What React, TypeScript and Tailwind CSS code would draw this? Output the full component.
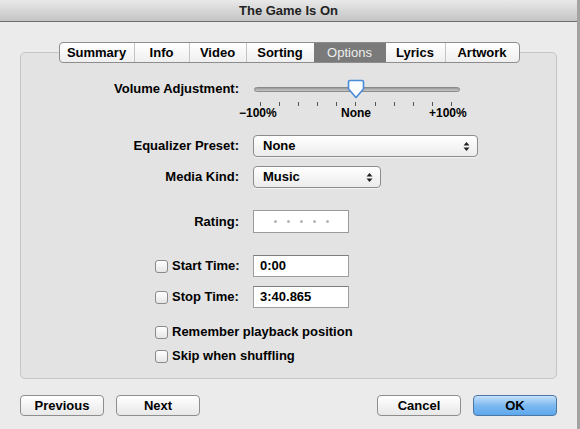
import React from "react";

const font = { fontFamily: '"Liberation Sans", Arial, sans-serif' };

const tabs = ["Summary", "Info", "Video", "Sorting", "Options", "Lyrics", "Artwork"];
const tabWidths: Record<string, string> = {
  Summary: "w-[74px]",
  Info: "w-[55px]",
  Video: "w-[57px]",
  Sorting: "w-[68px]",
  Options: "w-[72px]",
  Lyrics: "w-[59px]",
  Artwork: "w-[74px]",
};

function Arrows() {
  return (
    <svg width="7" height="11" viewBox="0 0 7 11" className="shrink-0">
      <path d="M3.5 1 L6.5 4.5 H0.5 Z" fill="#222" />
      <path d="M3.5 10 L6.5 6.5 H0.5 Z" fill="#222" />
    </svg>
  );
}

function Popup({ label, width }: { label: string; width: string }) {
  return (
    <div
      className={`flex h-[22px] ${width} items-center justify-between rounded-[4px] border border-[#8c8c8c] bg-gradient-to-b from-white to-[#ececec] pl-[9px] pr-[7px] shadow-[0_1px_0_rgba(255,255,255,0.6)]`}
    >
      <span>{label}</span>
      <Arrows />
    </div>
  );
}

function Checkbox() {
  return (
    <span className="block h-[13px] w-[13px] shrink-0 rounded-[3px] border border-[#8a8a8a] bg-gradient-to-b from-white to-[#e6e6e6]" />
  );
}

function Field({ value }: { value: string }) {
  return (
    <div className="flex h-[22px] w-[96px] items-center border border-[#9e9e9e] border-t-[#7d7d7d] bg-white pl-[6px]">
      {value}
    </div>
  );
}

function Button({ label, primary }: { label: string; primary?: boolean }) {
  return (
    <button
      type="button"
      className={
        primary
          ? "h-[21px] w-[84px] rounded-[4px] border border-[#4f77a3] bg-gradient-to-b from-[#c4e0fa] via-[#7db9f0] to-[#5da7ee] font-bold"
          : "h-[21px] w-[84px] rounded-[4px] border border-[#8e8e8e] bg-gradient-to-b from-white to-[#e8e8e8] font-bold"
      }
    >
      {label}
    </button>
  );
}

export default function App() {
  const ticks = Array.from({ length: 11 }, (_, i) => i);

  return (
    <div
      style={font}
      className="flex h-[429px] w-[580px] flex-col overflow-hidden border-r-[3px] border-[#a3a3a3] bg-[#ebebeb] text-[13px] text-black"
    >
      <div className="flex h-[22px] shrink-0 items-center justify-center border-b border-[#6f6f6f] bg-gradient-to-b from-[#e9e9e9] to-[#c4c4c4] text-[13px] font-bold text-[#222]">
        The Game Is On
      </div>

      <div className="px-[20px] pt-[20px]">
        <div className="relative z-10 flex justify-center pl-[1px]">
          <div className="flex h-[21px] overflow-hidden rounded-[4px] border border-[#8d8d8d] bg-gradient-to-b from-white to-[#efefef] font-bold">
            {tabs.map((t, i) => (
              <div
                key={t}
                className={`flex items-center justify-center ${tabWidths[t]} ${
                  t === "Options"
                    ? "bg-[#7a7a7a] font-normal text-[#eeeeee]"
                    : i > 0 && tabs[i - 1] !== "Options"
                    ? "border-l border-[#c4c4c4]"
                    : ""
                }`}
              >
                {t}
              </div>
            ))}
          </div>
        </div>

        <div className="-mt-[11px] h-[327px] rounded-[5px] border border-[#c6c6c6] bg-[#e3e3e3] pt-[27px] font-bold whitespace-nowrap">
          {/* Volume */}
          <div className="flex h-[18px] items-center">
            <div className="w-[218px] text-right">Volume Adjustment:</div>
            <div className="relative ml-[15px] h-[18px] w-[206px]">
              <div className="absolute left-0 right-0 top-[7px] h-[5px] rounded-full border border-[#8a8a8a] bg-gradient-to-b from-[#9a9a9a] to-[#c9c9c9]" />
              <svg
                width="18"
                height="20"
                viewBox="0 0 18 20"
                className="absolute left-[93px] top-[-1px]"
              >
                <path
                  d="M3 1.5 H15 Q16.5 1.5 16.5 3 V10 L9 18.5 L1.5 10 V3 Q1.5 1.5 3 1.5 Z"
                  fill="#fbfdff"
                  stroke="#4a8ad6"
                  strokeWidth="1.6"
                  strokeLinejoin="round"
                />
              </svg>
            </div>
          </div>
          <div className="flex">
            <div className="w-[218px]" />
            <div className="w-[240px]">
              <div className="ml-[21px] mt-[4px] flex h-[4px] w-[192px] justify-between">
                {ticks.map((i) => (
                  <span key={i} className="block h-[4px] w-px bg-[#555]" />
                ))}
              </div>
              <div className="flex h-[13px] items-center text-[12px]">
                <span className="w-[36px]">−100%</span>
                <span className="ml-[66px] w-[30px] text-center">None</span>
                <span className="ml-[58px]">+100%</span>
              </div>
            </div>
          </div>

          {/* Equalizer */}
          <div className="mt-[16px] flex items-center">
            <div className="w-[218px] text-right">Equalizer Preset:</div>
            <div className="ml-[14px]">
              <Popup label="None" width="w-[225px]" />
            </div>
          </div>

          {/* Media kind */}
          <div className="mt-[9px] flex items-center">
            <div className="w-[218px] text-right">Media Kind:</div>
            <div className="ml-[14px]">
              <Popup label="Music" width="w-[128px]" />
            </div>
          </div>

          {/* Rating */}
          <div className="mt-[22px] flex items-center">
            <div className="w-[218px] text-right">Rating:</div>
            <div className="ml-[14px] flex h-[23px] w-[96px] items-center justify-center gap-[10px] border border-[#9a9a9a] bg-white">
              {[0, 1, 2, 3, 4].map((i) => (
                <span key={i} className="block h-[3px] w-[3px] rounded-full bg-[#b5b5b5]" />
              ))}
            </div>
          </div>

          {/* Start time */}
          <div className="mt-[22px] flex items-center">
            <div className="flex w-[218px] items-center gap-[4px] pl-[134px]">
              <Checkbox />
              <span>Start Time:</span>
            </div>
            <div className="ml-[14px]">
              <Field value="0:00" />
            </div>
          </div>

          {/* Stop time */}
          <div className="mt-[9px] flex items-center">
            <div className="flex w-[218px] items-center gap-[4px] pl-[134px]">
              <Checkbox />
              <span>Stop Time:</span>
            </div>
            <div className="ml-[14px]">
              <Field value="3:40.865" />
            </div>
          </div>

          <div className="mt-[16px] flex h-[16px] items-center gap-[4px] pl-[134px]">
            <Checkbox />
            <span>Remember playback position</span>
          </div>
          <div className="mt-[8px] flex h-[16px] items-center gap-[4px] pl-[134px]">
            <Checkbox />
            <span>Skip when shuffling</span>
          </div>
        </div>

        <div className="mt-[16px] flex justify-between">
          <div className="flex gap-[12px]">
            <Button label="Previous" />
            <Button label="Next" />
          </div>
          <div className="flex gap-[12px]">
            <Button label="Cancel" />
            <Button label="OK" primary />
          </div>
        </div>
      </div>
    </div>
  );
}
